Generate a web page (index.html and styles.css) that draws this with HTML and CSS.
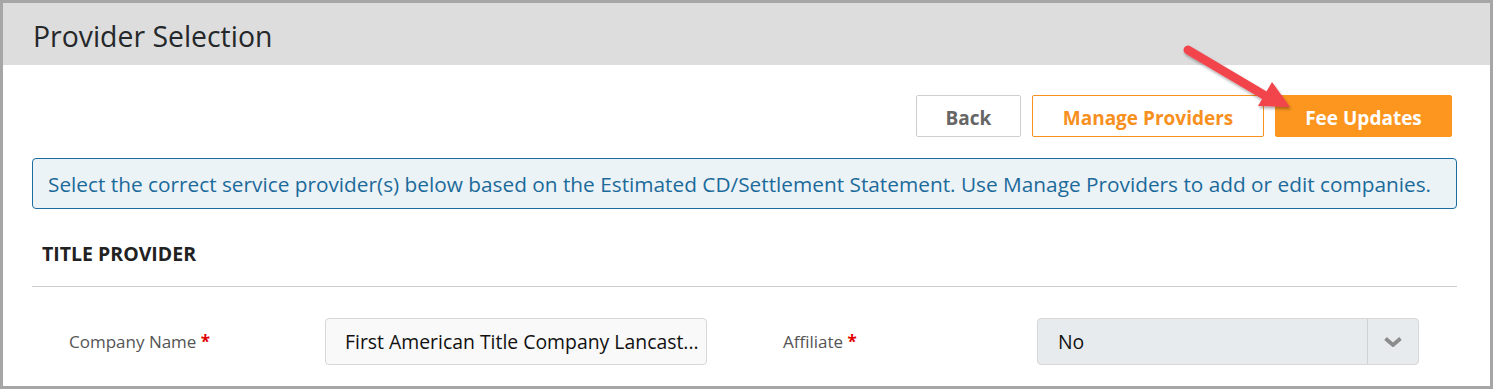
FILE: index.html
```html
<!DOCTYPE html>
<html lang="en">
<head>
    <meta charset="UTF-8">
    <meta name="viewport" content="width=device-width, initial-scale=1.0">
    <title>Provider Selection</title>
    <link rel="stylesheet" href="styles.css">
</head>
<body>
    <div class="frame">
        <div class="header">
            <h1>Provider Selection</h1>
        </div>
        <div class="content">
            <div class="actions">
                <button class="btn btn-back">Back</button>
                <button class="btn btn-outline">Manage Providers</button>
                <button class="btn btn-primary">Fee Updates</button>
            </div>
            <div class="info">Select the correct service provider(s) below based on the Estimated CD/Settlement Statement. Use Manage Providers to add or edit companies.</div>
            <h3 class="section-title">TITLE PROVIDER</h3>
            <div class="row">
                <label class="label">Company Name <span class="req">*</span></label>
                <div class="field">First American Title Company Lancast...</div>
                <label class="label label-right">Affiliate <span class="req">*</span></label>
                <div class="select">
                    <span class="select-value">No</span>
                    <span class="select-arrow">
                        <svg width="18" height="10" viewBox="0 0 18 10"><path d="M1.5 1.5 L9 8 L16.5 1.5" fill="none" stroke="#8c8c8c" stroke-width="3.8"/></svg>
                    </span>
                </div>
            </div>
        </div>
        <svg class="pointer" width="130" height="80" viewBox="0 0 130 80">
            <defs>
                <filter id="sh" x="-20%" y="-20%" width="140%" height="140%">
                    <feDropShadow dx="1" dy="2" stdDeviation="1.5" flood-color="#000" flood-opacity="0.35"/>
                </filter>
            </defs>
            <g filter="url(#sh)">
                <line x1="8" y1="10" x2="84" y2="55" stroke="#f2444c" stroke-width="9" stroke-linecap="round"/>
                <polygon points="110,67 92,42 78,66" fill="#f2444c"/>
            </g>
        </svg>
    </div>
</body>
</html>
```

FILE: styles.css
```css
body {
    margin: 0;
    font-family: "Open Sans", "Noto Sans", Arial, sans-serif;
    background: #fff;
}
.frame {
    position: relative;
    height: 389px;
    box-sizing: border-box;
    border: 3px solid #a6a6a6;
    overflow: hidden;
}
.header {
    height: 62px;
    box-sizing: border-box;
    padding: 4px 0 0 30px;
    background: #dddddd;
    display: flex;
    align-items: center;
}
.header h1 {
    margin: 0;
    font-size: 28.4px;
    font-weight: 400;
    color: #25282b;
}
.content {
    padding: 0 33px 0 29px;
}
.actions {
    display: flex;
    justify-content: flex-end;
    gap: 11px;
    padding: 30px 5px 0 0;
}
.btn {
    height: 42px;
    font-family: inherit;
    font-size: 19px;
    font-weight: 700;
    border-radius: 2px;
    cursor: pointer;
    padding: 4px 0 0;
}
.btn-back {
    width: 105px;
    background: #fff;
    color: #666;
    border: 1px solid #cfcfcf;
}
.btn-outline {
    width: 232px;
    background: #fff;
    color: #f7901e;
    border: 1px solid #f7901e;
}
.btn-primary {
    width: 177px;
    background: #fc961f;
    color: #fff;
    border: 1px solid #fc961f;
}
.info {
    margin-top: 21px;
    height: 51px;
    box-sizing: border-box;
    display: flex;
    align-items: center;
    padding-left: 15px;
    background: #ebf3f7;
    border: 1px solid #1c6d9d;
    border-radius: 4px;
    color: #1c6a9a;
    font-size: 20.8px;
    white-space: nowrap;
    overflow: hidden;
}
.section-title {
    margin: 0;
    padding: 31px 0 19px 10px;
    font-size: 19.5px;
    font-weight: 700;
    color: #222;
    border-bottom: 1px solid #cccccc;
}
.row {
    display: flex;
    align-items: center;
    margin-top: 31px;
}
.label {
    box-sizing: border-box;
    width: 293px;
    padding-left: 37px;
    font-size: 17px;
    color: #555;
}
.label-right {
    width: 330px;
    padding-left: 76px;
}
.req {
    color: #e00000;
    font-weight: 700;
}
.field, .select {
    box-sizing: border-box;
    width: 382px;
    height: 47px;
    border: 1px solid #d7d7d7;
    border-radius: 4px;
    font-size: 19.4px;
    color: #111;
    display: flex;
    align-items: center;
}
.field {
    background: #f9f9f9;
    padding-left: 19px;
}
.select {
    background: #e8ebee;
}
.select-value {
    flex: 1;
    padding-left: 20px;
}
.select-arrow {
    width: 50px;
    height: 100%;
    border-left: 1px solid #cfd2d5;
    display: flex;
    align-items: center;
    justify-content: center;
}
.pointer {
    position: absolute;
    left: 1177px;
    top: 37px;
}
```
